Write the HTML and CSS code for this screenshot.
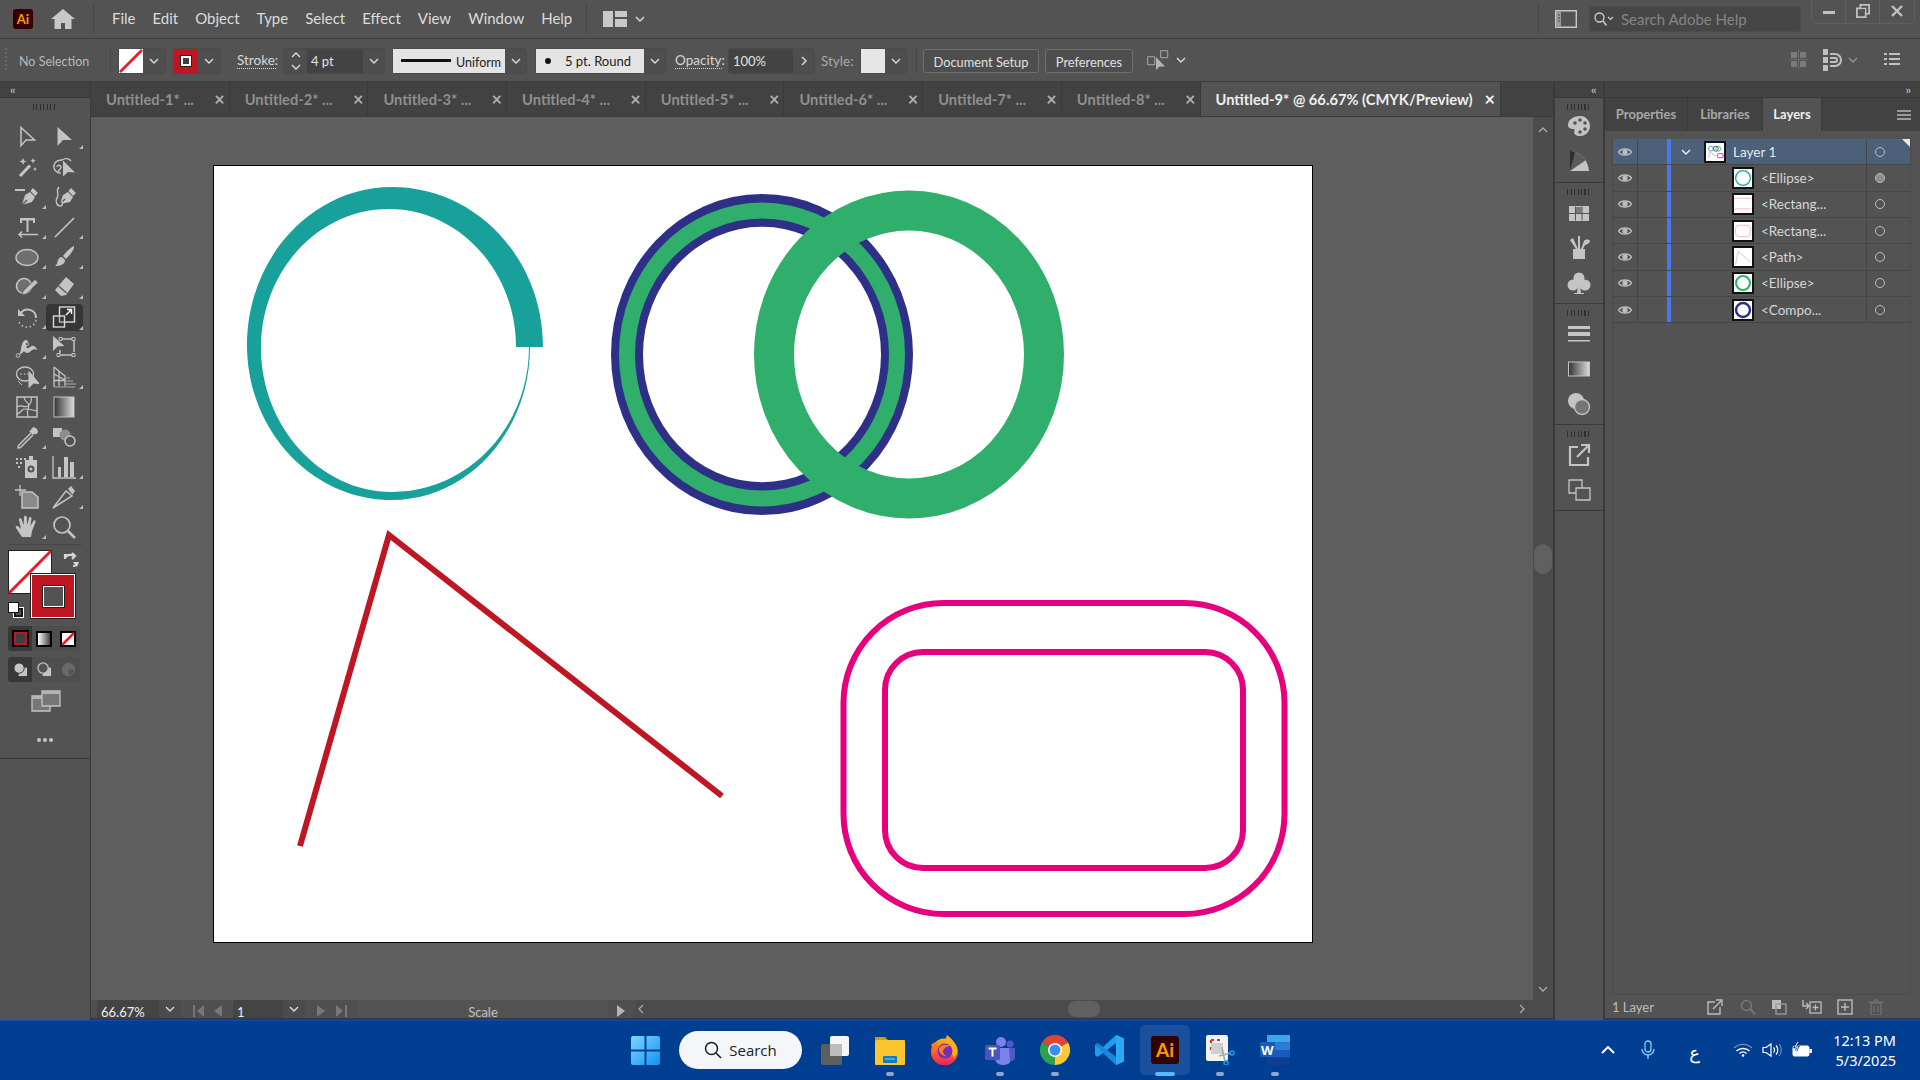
FILE: index.html
```html
<!DOCTYPE html>
<html lang="en">
<head>
<meta charset="utf-8">
<title>Adobe Illustrator</title>
<link rel="stylesheet" href="styles.css">
</head>
<body>
<svg class="defs" width="0" height="0" aria-hidden="true">
  <defs>
    <linearGradient id="gbar" x1="0" x2="1" y1="0" y2="0"><stop offset="0" stop-color="#333"/><stop offset="1" stop-color="#ddd"/></linearGradient>
    <linearGradient id="gwin" x1="0" x2="1" y1="0" y2="1"><stop offset="0" stop-color="#7cd8fb"/><stop offset="1" stop-color="#0f93f5"/></linearGradient>
    <linearGradient id="gfox" x1="0" x2="0" y1="0" y2="1"><stop offset="0" stop-color="#ffb31a"/><stop offset=".55" stop-color="#ff5a2b"/><stop offset="1" stop-color="#e3215f"/></linearGradient>
    <symbol id="chev" viewBox="0 0 10 6"><path d="M1 1l4 4 4-4" fill="none" stroke="#dcdcdc" stroke-width="1.4"/></symbol>
    <symbol id="t-sel" viewBox="0 0 24 24"><path d="M6 2.5v18l5-5.5h8.5z" fill="none" stroke="#c4c4c4" stroke-width="1.5"/></symbol>
    <symbol id="t-dir" viewBox="0 0 24 24"><path d="M5.5 2v19l5.5-6h9z" fill="#c4c4c4"/></symbol>
    <symbol id="t-wand" viewBox="0 0 24 24"><path d="M5 21L15 10.5" stroke="#c4c4c4" stroke-width="3" fill="none"/><path d="M8 3l1 2.5 2.5 1L9 7.5 8 10 7 7.5 4.500 6.500 7 5.500zM18 3l.8 2 2 .8-2 .8-.8 2-.8-2-2-.8 2-.8zM20 12l.6 1.500 1.500.6-1.500.6-.6 1.500-.6-1.500-1.500-.6 1.500-.6z" fill="#c4c4c4"/></symbol>
    <symbol id="t-lasso" viewBox="0 0 24 24"><path d="M10 5c-6 0-9 4-8 8 1 3 4 5 7 5M5 12a2 2 0 1 1 3 2c-1 1-2 2-2 4M10 5c3-2 7-2 9 1" fill="none" stroke="#c4c4c4" stroke-width="1.400"/><path d="M11 5.500v16l5-4.500 7 .5z" fill="#c4c4c4"/></symbol>
    <symbol id="t-pen" viewBox="0 0 24 24"><path d="M0 5h10" stroke="#c4c4c4" stroke-width="2"/><path d="M7 20l3-10 5-3 5 5-3 5zM15.500 6l2.500-3 5 5-3 3z" fill="#c4c4c4"/><path d="M7 20l5-5" stroke="#535353" stroke-width="1.200"/></symbol>
    <symbol id="t-curve" viewBox="0 0 24 24"><path d="M8 19l3-9 5-3 5 5-3 5zM16.500 6l2.500-3 5 5-3 3z" fill="#c4c4c4"/><path d="M8 19l5-5" stroke="#535353" stroke-width="1.200"/><path d="M7 2C3 6 8 9 5 13c-2 3 0 8 3 8s3-3 2-5" fill="none" stroke="#c4c4c4" stroke-width="1.400"/></symbol>
    <symbol id="t-type" viewBox="0 0 24 24"><path d="M5 3h15v5h-2V5.500h-4.500V17h-2V5.500H7V8H5z" fill="#c4c4c4"/><path d="M23 19.500H4M7 16.500l-3 3 3 3" fill="none" stroke="#c4c4c4" stroke-width="1.500"/></symbol>
    <symbol id="t-line" viewBox="0 0 24 24"><path d="M3 22L22 3" stroke="#c4c4c4" stroke-width="1.700"/></symbol>
    <symbol id="t-ell" viewBox="0 0 24 24"><ellipse cx="12" cy="12.500" rx="11" ry="8" fill="#6f6f6f" stroke="#c4c4c4" stroke-width="1.400"/></symbol>
    <symbol id="t-brush" viewBox="0 0 24 24"><path d="M22 1c1 3-4 9-8 13l-3-3c3-4 8-9 11-10z" fill="#c4c4c4"/><path d="M10 12l3 3c0 4-4 6-10 6 3-2 2-4 3-6s2-3 4-3z" fill="#c4c4c4"/></symbol>
    <symbol id="t-shaper" viewBox="0 0 24 24"><circle cx="9" cy="11" r="7.500" fill="#6f6f6f" stroke="#c4c4c4" stroke-width="1.600"/><path d="M7 20l1-4L20 4.500l3 3L11.500 19z" fill="#c4c4c4" stroke="#535353" stroke-width=".8"/></symbol>
    <symbol id="t-eraser" viewBox="0 0 24 24"><path d="M14 2l8 7-8 11-5 1-6-6z" fill="#c4c4c4"/><path d="M6.500 11l8 7" stroke="#535353" stroke-width="1.300"/></symbol>
    <symbol id="t-rot" viewBox="0 0 24 24"><path d="M6 8c4-6 15-4 15 5" fill="none" stroke="#c4c4c4" stroke-width="1.800"/><path d="M3 4v7h7z" fill="#c4c4c4"/><path d="M21 15a9 9 0 0 1-17 2" fill="none" stroke="#c4c4c4" stroke-width="1.500" stroke-dasharray="1.500 2.600"/></symbol>
    <symbol id="t-scale" viewBox="0 0 24 24"><rect x="7.500" y="2" width="15" height="15" fill="none" stroke="#d8d8d8" stroke-width="1.400"/><rect x="1.500" y="11" width="11" height="11" fill="#333" fill-opacity=".2" stroke="#d8d8d8" stroke-width="1.400"/><path d="M14 10l5-5M15 4.500h4.500V9" fill="none" stroke="#fff" stroke-width="1.400"/></symbol>
    <symbol id="t-width" viewBox="0 0 24 24"><path d="M2 20c5 0 3-8 6-13 1.500-2 4-3 5 0 1 2-3 4-1 6 2 1 4-3 7-2 2 1 3 3 3 4-2-1-4-1-6 1-3 3-6 2-7 0-1 1-3 4-7 4z" fill="#c4c4c4"/><circle cx="3" cy="20.500" r="1.800" fill="#535353" stroke="#c4c4c4"/><circle cx="12" cy="9" r="1.600" fill="#535353" stroke="#c4c4c4"/></symbol>
    <symbol id="t-free" viewBox="0 0 24 24"><path d="M1 1v15l4.500-4.500 7-.5z" fill="#c4c4c4"/><path d="M9 4h11M22 6v11M7 20h13M8 15v3" fill="none" stroke="#c4c4c4" stroke-width="1.500"/><path d="M7 2.500h3v3H7zM20 2.500h3v3h-3zM20 18.500h3v3h-3zM5 18.500h3v3H5z" fill="#535353" stroke="#c4c4c4"/></symbol>
    <symbol id="t-build" viewBox="0 0 24 24"><ellipse cx="10" cy="9" rx="8.500" ry="7" fill="none" stroke="#c4c4c4" stroke-width="1.400"/><path d="M6 9h.1M9.500 9h.1M13 9h.1" stroke="#c4c4c4" stroke-width="1.600" stroke-linecap="round"/><path d="M3 16l4 4M14 6.500v16l4.500-4.500 5.500.5z" fill="#c4c4c4" stroke="#c4c4c4"/></symbol>
    <symbol id="t-persp" viewBox="0 0 24 24"><path d="M2 2v20M2 2l11 9v10M2 9l11 6M2 15.500h11M7 6v16" fill="none" stroke="#c4c4c4" stroke-width="1.300"/><path d="M14 13h4M14 16h7M14 19h10M2 22h21" stroke="#8f8f8f" stroke-width="1.400"/></symbol>
    <symbol id="t-mesh" viewBox="0 0 24 24"><rect x="2" y="2" width="20" height="20" fill="none" stroke="#c4c4c4" stroke-width="1.500"/><path d="M2 12c6-4 8 3 12-2s2-5 2-8M9 2c0 5 5 6 5 8s-3 5-1 12M2 19c4-1 5-5 7-5s6 0 13 2" fill="none" stroke="#c4c4c4" stroke-width="1.200"/></symbol>
    <symbol id="t-grad" viewBox="0 0 24 24"><rect x="2" y="2" width="20" height="20" fill="url(#gbar)" stroke="#c4c4c4" stroke-width="1"/></symbol>
    <symbol id="t-drop" viewBox="0 0 24 24"><path d="M16 8l-12 12c-1 1-1 2-1 3 1 0 2 0 3-1L18 10" fill="none" stroke="#c4c4c4" stroke-width="1.500"/><path d="M14 6l4 4 1-1c1 0 3 1 4-2 0-3-4-6-6-4-1 1-1 2-1 2z" fill="#c4c4c4"/></symbol>
    <symbol id="t-blend" viewBox="0 0 24 24"><path d="M1 3h9v9H1z" fill="#c4c4c4"/><circle cx="13" cy="10" r="5.500" fill="#8e8e8e"/><circle cx="18" cy="16" r="5" fill="#535353" stroke="#c4c4c4" stroke-width="1.500"/></symbol>
    <symbol id="t-spray" viewBox="0 0 24 24"><path d="M1 4h2M5 4h2M9 4h2M1 8h2M5 8h2M3 12h2" stroke="#c4c4c4" stroke-width="2"/><path d="M14 1h4v4h-4zM10 5h12v18H10z" fill="#c4c4c4"/><circle cx="16" cy="14" r="3.500" fill="#535353"/><circle cx="16" cy="14" r="1.500" fill="#c4c4c4"/></symbol>
    <symbol id="t-chart" viewBox="0 0 24 24"><path d="M1 1v22h23" fill="none" stroke="#c4c4c4" stroke-width="1.300"/><path d="M6 12h3v10H6zM12 2h4v20h-4zM18 7h4v15h-4z" fill="#c4c4c4"/></symbol>
    <symbol id="t-board" viewBox="0 0 24 24"><path d="M7 7h10l6 5v11H7z" fill="#8a8a8a" stroke="#c4c4c4" stroke-width="1.500"/><path d="M5 0v11M0 5h11" stroke="#c4c4c4" stroke-width="1.300"/></symbol>
    <symbol id="t-knife" viewBox="0 0 24 24"><path d="M1 23L14 6l6 5z" fill="none" stroke="#c4c4c4" stroke-width="1.500"/><path d="M16 4l3-3 4 5-2.500 3.500z" fill="#c4c4c4"/></symbol>
    <symbol id="t-hand" viewBox="0 0 24 24"><path d="M7 22l-6-9c-1-2 1-3 2.500-1.500L6 14 4 5c-.4-2 2-2.500 2.600-.7L8.500 10l.5-8c.2-1.800 2.600-1.800 2.800 0l.4 8 1.800-7c.5-1.800 2.800-1.200 2.500.6L15.500 11l2.800-5c1-1.500 3-.6 2.200 1.200L17 16l-1 6z" fill="#c4c4c4"/></symbol>
    <symbol id="t-zoom" viewBox="0 0 24 24"><circle cx="10" cy="10" r="8" fill="none" stroke="#c4c4c4" stroke-width="1.700"/><path d="M16 16l7 7" stroke="#c4c4c4" stroke-width="2.500"/></symbol>
    <symbol id="eye" viewBox="0 0 14 10"><path d="M.5 5C3 1 11 1 13.500 5 11 9 3 9 .5 5z" fill="none" stroke="#bdbdbd" stroke-width="1.400"/><circle cx="7" cy="5" r="2.600" fill="#bdbdbd"/></symbol>
    <symbol id="d-palette" viewBox="0 0 24 24"><path d="M13 2C6 2 1 6 1 11c0 3 3 4 5 4s2 1 1 3c0 2 2 4 6 4 6 0 10-5 10-10S19 2 13 2z" fill="#c4c4c4"/><circle cx="8" cy="9" r="1.800" fill="#535353"/><circle cx="13" cy="6" r="1.800" fill="#535353"/><circle cx="18" cy="9" r="1.800" fill="#535353"/><circle cx="18" cy="15" r="1.800" fill="#535353"/><circle cx="13" cy="18" r="1.800" fill="#535353"/></symbol>
    <symbol id="d-guide" viewBox="0 0 24 24"><path d="M3 2c11 1 18 9 19 20H3z" fill="#c4c4c4"/><path d="M3 22L8 3 3 2zM3 22L14 6 8 3zM3 22l16-11-5-5z" fill="#5a5a5a"/><path d="M3 22L8 3 3 2z" fill="#2e2e2e"/></symbol>
    <symbol id="d-swatch" viewBox="0 0 24 24"><path d="M2 5h20v15H2z" fill="#c4c4c4"/><path d="M8.500 5.500v14M15 5.500v14M2 12.500h20" stroke="#535353"/><path d="M9 6h6v6H9z" fill="#7a7a7a"/></symbol>
    <symbol id="d-brushes" viewBox="0 0 24 24"><path d="M6 13h12v10H6z" fill="#c4c4c4"/><path d="M9 13L3 4l3-2 5 11zM11 13V0h2v13zM14 13l3-8c1-2 6-2 6 0s-4 4-5 4l-2 4z" fill="#c4c4c4"/></symbol>
    <symbol id="d-club" viewBox="0 0 24 24"><circle cx="12" cy="7" r="5.500" fill="#c4c4c4"/><circle cx="6" cy="14" r="5.500" fill="#c4c4c4"/><circle cx="18" cy="14" r="5.500" fill="#c4c4c4"/><path d="M11 12h2l1 10h3v1H7v-1h3z" fill="#c4c4c4"/></symbol>
    <symbol id="d-stroke" viewBox="0 0 24 24"><path d="M1 4h22v3H1zM1 10h22v4H1z" fill="#c4c4c4"/><path d="M1 18h22v1.500H1z" fill="#c4c4c4"/></symbol>
    <symbol id="d-grad" viewBox="0 0 24 24"><rect x="1.500" y="5" width="21" height="14" fill="url(#gbar)" stroke="#c4c4c4"/></symbol>
    <symbol id="d-trans" viewBox="0 0 24 24"><circle cx="9" cy="9" r="8" fill="#c4c4c4"/><circle cx="15" cy="15" r="7.500" fill="#757575" stroke="#c4c4c4" stroke-width="1.300"/></symbol>
    <symbol id="d-export" viewBox="0 0 24 24"><path d="M11 4H3v18h18v-8" fill="none" stroke="#c4c4c4" stroke-width="2.200"/><path d="M10 14L21 3M14 2h8v8" fill="none" stroke="#c4c4c4" stroke-width="2.200"/></symbol>
    <symbol id="d-boards" viewBox="0 0 24 24"><path d="M2 2h13v13H2z" fill="none" stroke="#c4c4c4" stroke-width="1.300"/><path d="M9 10h14v12H9z" fill="#535353" stroke="#c4c4c4" stroke-width="1.300"/></symbol>
  </defs>
</svg>

<div class="app">
  <header class="titlebar">
    <div class="ai-logo">Ai</div>
    <svg class="home" viewBox="0 0 24 20"><path d="M12 0L0 10h3.500v10h6.500v-6h4v6h6.500V10H24z" fill="#c8c8c8"/></svg>
    <i class="vsep first"></i>
    <nav class="menu"><span>File</span><span>Edit</span><span>Object</span><span>Type</span><span>Select</span><span>Effect</span><span>View</span><span>Window</span><span>Help</span></nav>
    <i class="vsep"></i>
    <svg class="workspace" viewBox="0 0 24 16"><path d="M0 0h10v16H0zM12 0h12v6H12zM12 8h12v8H12z" fill="#c8c8c8"/></svg>
    <svg class="chev wsc"><use href="#chev"/></svg>
    <div class="grow"></div>
    <i class="vsep tall"></i>
    <svg class="panelicon" viewBox="0 0 22 18"><path d="M.7.700h20.600v16.600H.7z" fill="none" stroke="#c8c8c8" stroke-width="1.400"/><path d="M1 1h5v16H1z" fill="#9a9a9a"/><path d="M3 5h2M3 8h2M3 11h2" stroke="#444"/></svg>
    <div class="search">
      <svg class="sglass" viewBox="0 0 20 14"><circle cx="5.500" cy="5.500" r="4.500" fill="none" stroke="#d0d0d0" stroke-width="1.300"/><path d="M9 9l3.500 4.500" stroke="#d0d0d0" stroke-width="1.400"/><path d="M14 5l2.500 2.500L19 5" fill="none" stroke="#d0d0d0" stroke-width="1.100"/></svg>
      <span>Search Adobe Help</span>
    </div>
    <div class="winbtns">
      <div class="wb"><svg viewBox="0 0 14 14"><path d="M1 7h12v3H1z" fill="#c0c0c0"/></svg></div>
      <div class="wb"><svg viewBox="0 0 16 16"><path d="M5 1h10v10h-4v4H1V5h4z" fill="none" stroke="#c0c0c0" stroke-width="2"/><path d="M5 5h6v6" fill="none" stroke="#c0c0c0" stroke-width="1.500"/></svg></div>
      <div class="wb nb"><svg viewBox="0 0 14 14"><path d="M2 2l10 10M12 2L2 12" stroke="#c0c0c0" stroke-width="2.400"/></svg></div>
    </div>
  </header>

  <section class="controlbar">
    <i class="cgrip"></i>
    <span class="lbl nosel">No Selection</span>
    <i class="csep"></i>
    <div class="grp g-fill"><div class="swatch white"><svg viewBox="0 0 24 24"><path d="M1 23L23 1" stroke="#e8202a" stroke-width="2.800"/></svg></div><div class="dd"><svg class="chev"><use href="#chev"/></svg></div></div>
    <div class="grp g-stroke"><div class="swatch red"><i class="hole"></i></div><div class="dd"><svg class="chev"><use href="#chev"/></svg></div></div>
    <span class="lbl dotted l-stroke">Stroke:</span>
    <div class="grp g-spin">
      <div class="spin"><svg class="chev up"><use href="#chev"/></svg><svg class="chev"><use href="#chev"/></svg></div>
      <div class="field f-pt">4 pt</div>
      <div class="dd"><svg class="chev"><use href="#chev"/></svg></div>
    </div>
    <div class="grp g-line">
      <div class="light lineprev"><i class="bar"></i><span>Uniform</span></div>
      <div class="dd"><svg class="chev"><use href="#chev"/></svg></div>
    </div>
    <div class="grp g-round">
      <div class="light roundprev"><i class="dot"></i><span>5 pt. Round</span></div>
      <div class="dd"><svg class="chev"><use href="#chev"/></svg></div>
    </div>
    <span class="lbl dotted l-op">Opacity:</span>
    <div class="grp g-op">
      <div class="field f-op">100%</div>
      <div class="dd"><svg class="chev right" viewBox="0 0 6 10"><path d="M1 1l4 4-4 4" fill="none" stroke="#dcdcdc" stroke-width="1.400"/></svg></div>
    </div>
    <span class="lbl dim l-style">Style:</span>
    <div class="grp g-style"><div class="swatch pale"></div><div class="dd"><svg class="chev"><use href="#chev"/></svg></div></div>
    <i class="csep s2"></i>
    <button class="cbtn b-doc">Document Setup</button>
    <button class="cbtn b-pref">Preferences</button>
    <svg class="isol" viewBox="0 0 22 20"><path d="M.700 6.700h7v8h-7zM13.700.700h7v7h-7z" fill="none" stroke="#a8a8a8"/><path d="M9 7v13l3.500-3.500H18z" fill="#b4b4b4"/></svg>
    <svg class="chev isc"><use href="#chev"/></svg>
    <div class="grow"></div>
    <svg class="cr cr-grid" viewBox="0 0 20 20"><path d="M2 2h6v6H2zM11 2h6v6h-6zM2 11h6v6H2zM11 11h6v6h-6z" fill="#7a7a7a"/><path d="M0 9.500h19M9.500 0v19" stroke="#6a6a6a"/></svg>
    <svg class="cr cr-mag" viewBox="0 0 20 24"><path d="M1 1h5v6H1zM1 9h5v6H1zM1 17h5v6H1z" fill="#c0c0c0"/><path d="M8 6h5a6 6 0 0 1 0 12H8M8 10h5a2 2 0 0 1 0 4H8" fill="none" stroke="#c0c0c0" stroke-width="2"/></svg>
    <svg class="chev cr-c"><use href="#chev"/></svg>
    <svg class="cr cr-list" viewBox="0 0 16 14"><path d="M0 1h3M5 1h11M0 6h3M5 6h11M0 11h3M5 11h11" stroke="#c0c0c0" stroke-width="1.800"/></svg>
  </section>

  <main class="workspace-area">
    <aside class="toolpanel">
      <div class="phead"><span class="dbl">‹‹</span></div>
      <i class="grip"></i>
      <div class="tools">
        <div class="tool"><svg><use href="#t-sel"/></svg></div>
        <div class="tool m"><svg><use href="#t-dir"/></svg></div>
        <div class="tool"><svg><use href="#t-wand"/></svg></div>
        <div class="tool"><svg><use href="#t-lasso"/></svg></div>
        <div class="tool m"><svg><use href="#t-pen"/></svg></div>
        <div class="tool"><svg><use href="#t-curve"/></svg></div>
        <div class="tool m"><svg><use href="#t-type"/></svg></div>
        <div class="tool m"><svg><use href="#t-line"/></svg></div>
        <div class="tool m"><svg><use href="#t-ell"/></svg></div>
        <div class="tool m"><svg><use href="#t-brush"/></svg></div>
        <div class="tool m"><svg><use href="#t-shaper"/></svg></div>
        <div class="tool m"><svg><use href="#t-eraser"/></svg></div>
        <div class="tool m"><svg><use href="#t-rot"/></svg></div>
        <div class="tool m on"><svg><use href="#t-scale"/></svg></div>
        <div class="tool m"><svg><use href="#t-width"/></svg></div>
        <div class="tool"><svg><use href="#t-free"/></svg></div>
        <div class="tool m"><svg><use href="#t-build"/></svg></div>
        <div class="tool m"><svg><use href="#t-persp"/></svg></div>
        <div class="tool"><svg><use href="#t-mesh"/></svg></div>
        <div class="tool"><svg><use href="#t-grad"/></svg></div>
        <div class="tool m"><svg><use href="#t-drop"/></svg></div>
        <div class="tool"><svg><use href="#t-blend"/></svg></div>
        <div class="tool m"><svg><use href="#t-spray"/></svg></div>
        <div class="tool m"><svg><use href="#t-chart"/></svg></div>
        <div class="tool"><svg><use href="#t-board"/></svg></div>
        <div class="tool m"><svg><use href="#t-knife"/></svg></div>
        <div class="tool m"><svg><use href="#t-hand"/></svg></div>
        <div class="tool"><svg><use href="#t-zoom"/></svg></div>
      </div>
      <i class="toolsep"></i>
      <div class="fillstroke">
        <svg class="fs-fill" viewBox="0 0 44 44"><rect x=".5" y=".5" width="43" height="43" fill="#fff" stroke="#222"/><path d="M1 43L43 1" stroke="#f01c24" stroke-width="3"/></svg>
        <div class="fs-stroke"><i></i></div>
        <svg class="fs-swap" viewBox="0 0 16 16"><path d="M2 6c1-3 5-4 9-2M9 1l3 3-3 3M5 3H2v4M14 10c0 2-1 4-4 4" fill="none" stroke="#d6d6d6" stroke-width="2.200"/><path d="M10 10l4 5 2-5z" fill="#d6d6d6"/></svg>
        <svg class="fs-def" viewBox="0 0 16 16"><rect x="5.500" y="5.500" width="10" height="10" fill="#111" stroke="#fff"/><rect x="7.800" y="7.800" width="5.400" height="5.400" fill="#535353"/><rect x=".5" y=".5" width="10" height="10" fill="#fff" stroke="#111"/></svg>
      </div>
      <div class="trio modes">
        <div class="cell on"><i class="cm c-color"></i></div>
        <div class="cell"><i class="cm c-grad"></i></div>
        <div class="cell"><svg class="cm" viewBox="0 0 16 16"><rect x="1" y="1" width="14" height="14" fill="#fff" stroke="#000" stroke-width="2"/><path d="M2 14L14 2" stroke="#f01c24" stroke-width="2.500"/></svg></div>
      </div>
      <div class="trio draws">
        <div class="cell on"><svg class="dm" viewBox="0 0 16 16"><path d="M6 6h9v9H6z" fill="#c4c4c4"/><circle cx="6.500" cy="6.500" r="5.500" fill="#c4c4c4" stroke="#333"/></svg></div>
        <div class="cell"><svg class="dm" viewBox="0 0 16 16"><path d="M6 6h9v9H6z" fill="#c4c4c4"/><circle cx="6.500" cy="6.500" r="5.500" fill="#535353" stroke="#c4c4c4" stroke-width="1.300"/></svg></div>
        <div class="cell"><svg class="dm" viewBox="0 0 16 16"><circle cx="8" cy="8" r="6.500" fill="#6a6a6a" stroke="#707070"/><path d="M8 8h6a6 6 0 0 1-6 6z" fill="#535353"/></svg></div>
      </div>
      <svg class="screenmode" viewBox="0 0 30 22"><path d="M1 6h18v15H1z" fill="#777" stroke="#c4c4c4" stroke-width="1.300"/><path d="M11 1h18v15H11z" fill="#777" stroke="#c4c4c4" stroke-width="1.300"/><path d="M11 1h18v3H11zM1 6h10v3H1z" fill="#b4b4b4"/></svg>
      <div class="more3"><i></i><i></i><i></i></div>
      <i class="toolend"></i>
    </aside>

    <section class="docarea">
      <div class="tabs">
        <div class="tab"><span>Untitled-1* ...</span><b>×</b></div>
        <div class="tab"><span>Untitled-2* ...</span><b>×</b></div>
        <div class="tab"><span>Untitled-3* ...</span><b>×</b></div>
        <div class="tab"><span>Untitled-4* ...</span><b>×</b></div>
        <div class="tab"><span>Untitled-5* ...</span><b>×</b></div>
        <div class="tab"><span>Untitled-6* ...</span><b>×</b></div>
        <div class="tab"><span>Untitled-7* ...</span><b>×</b></div>
        <div class="tab"><span>Untitled-8* ...</span><b>×</b></div>
        <div class="tab active"><span>Untitled-9* @ 66.67% (CMYK/Preview)</span><b>×</b></div>
      </div>
      <div class="canvasrow">
        <div class="canvas">
          <svg class="artboard" viewBox="213 165 1100 778">
            <rect x="213" y="165" width="1100" height="778" fill="#fff"/>
            <path d="M543 347C543 258.600 476 187 392 187C312 187 247 258 247 345C247 430.600 312 500 392 500C468 500 530 431.500 530 347L529 347C529 427 468 492 392 492C320 492 261 426 261 348C261 271 318 209 389 209C459 209 516 271 516 347Z" fill="#18a19b"/>
            <ellipse cx="762" cy="354.500" rx="151" ry="160.500" fill="#2e3087"/>
            <ellipse cx="762" cy="354.500" rx="143" ry="152" fill="#30ae6b"/>
            <ellipse cx="762" cy="354.500" rx="127" ry="136" fill="#2e3087"/>
            <ellipse cx="762" cy="354.500" rx="119" ry="127.700" fill="#fff"/>
            <ellipse cx="909" cy="354.500" rx="135" ry="144" fill="none" stroke="#30ae6b" stroke-width="40"/>
            <path d="M300 846L389 535L722 796" fill="none" stroke="#be1622" stroke-width="6"/>
            <rect x="843.500" y="603" width="441" height="311" rx="100" fill="none" stroke="#e6007e" stroke-width="6"/>
            <rect x="885" y="652" width="358" height="216" rx="38" fill="none" stroke="#e6007e" stroke-width="6"/>
          </svg>
        </div>
        <div class="vscroll">
          <svg class="chev sc-up" viewBox="0 0 10 6"><path d="M1 5l4-4 4 4" fill="none" stroke="#a8a8a8" stroke-width="1.400"/></svg>
          <i class="vthumb"></i>
          <svg class="chev sc-dn"><use href="#chev"/></svg>
        </div>
      </div>
      <div class="status">
        <div class="sfield z">66.67%</div>
        <div class="sdd"><svg class="chev"><use href="#chev"/></svg></div>
        <svg class="nav n1" viewBox="0 0 12 12"><path d="M0 0h2v12H0zM11 0v12L4 6z" fill="#777"/></svg>
        <svg class="nav n2" viewBox="0 0 8 12"><path d="M8 0v12L0 6z" fill="#777"/></svg>
        <div class="sfield p">1</div>
        <div class="sdd"><svg class="chev"><use href="#chev"/></svg></div>
        <svg class="nav n3" viewBox="0 0 8 12"><path d="M0 0v12l8-6z" fill="#777"/></svg>
        <svg class="nav n4" viewBox="0 0 12 12"><path d="M1 0v12l7-6zM10 0h2v12h-2z" fill="#777"/></svg>
        <div class="stool">Scale</div>
        <svg class="nav n5" viewBox="0 0 8 12"><path d="M0 0v12l8-6z" fill="#b4b4b4"/></svg>
        <div class="hscroll">
          <svg class="hs-l" viewBox="0 0 6 10"><path d="M5 1L1 5l4 4" fill="none" stroke="#a8a8a8" stroke-width="1.300"/></svg>
          <i class="hthumb"></i>
          <svg class="hs-r" viewBox="0 0 6 10"><path d="M1 1l4 4-4 4" fill="none" stroke="#a8a8a8" stroke-width="1.300"/></svg>
        </div>
      </div>
    </section>

    <aside class="dock">
      <div class="phead right"><span class="dbl">‹‹</span></div>
      <div class="dgroup h85"><i class="grip"></i><svg><use href="#d-palette"/></svg><svg><use href="#d-guide"/></svg></div>
      <div class="dgroup h120"><i class="grip"></i><svg><use href="#d-swatch"/></svg><svg><use href="#d-brushes"/></svg><svg><use href="#d-club"/></svg></div>
      <div class="dgroup h121"><i class="grip"></i><svg><use href="#d-stroke"/></svg><svg><use href="#d-grad"/></svg><svg><use href="#d-trans"/></svg></div>
      <div class="dgroup h86"><i class="grip"></i><svg><use href="#d-export"/></svg><svg><use href="#d-boards"/></svg></div>
    </aside>

    <aside class="panel">
      <div class="phead far"><span class="dbl">››</span></div>
      <div class="ptabs">
        <div class="ptab w83">Properties</div>
        <div class="ptab w75">Libraries</div>
        <div class="ptab active w59">Layers</div>
        <svg class="pmenu" viewBox="0 0 14 10"><path d="M0 1h14M0 5h14M0 9h14" stroke="#b8b8b8" stroke-width="1.300"/></svg>
      </div>
      <div class="layers">
        <div class="row sel">
          <div class="c-eye"><svg><use href="#eye"/></svg></div><div class="c-lock"></div><i class="cbar"></i>
          <svg class="tw" viewBox="0 0 10 6"><path d="M1 1l4 4 4-4" fill="none" stroke="#f0f0f0" stroke-width="1.400"/></svg>
          <svg class="thumb" viewBox="0 0 22 22"><circle cx="6" cy="7" r="3" fill="none" stroke="#18a19b"/><circle cx="12" cy="7" r="3" fill="none" stroke="#2e3087"/><circle cx="15" cy="7" r="3" fill="none" stroke="#30ae6b"/><path d="M3 18l2-7 7 5" fill="none" stroke="#e8a0b0"/><rect x="14" y="13" width="7" height="5" rx="1.500" fill="none" stroke="#ec008c"/></svg>
          <span class="lname">Layer 1</span>
          <div class="c-t"><i class="tgt"></i></div><i class="corner"></i>
        </div>
        <div class="row">
          <div class="c-eye"><svg><use href="#eye"/></svg></div><div class="c-lock"></div><i class="cbar"></i>
          <svg class="thumb sub" viewBox="0 0 22 22"><circle cx="11" cy="11" r="9" fill="none" stroke="#18a19b" stroke-width="1.500"/></svg>
          <span class="lname">&lt;Ellipse&gt;</span>
          <div class="c-t"><i class="tgt full"></i></div>
        </div>
        <div class="row">
          <div class="c-eye"><svg><use href="#eye"/></svg></div><div class="c-lock"></div><i class="cbar"></i>
          <svg class="thumb sub" viewBox="0 0 22 22"><path d="M1 4h20M1 17h20" fill="none" stroke="#f4b8d0" stroke-width="1.200"/></svg>
          <span class="lname">&lt;Rectang...</span>
          <div class="c-t"><i class="tgt"></i></div>
        </div>
        <div class="row">
          <div class="c-eye"><svg><use href="#eye"/></svg></div><div class="c-lock"></div><i class="cbar"></i>
          <svg class="thumb sub" viewBox="0 0 22 22"><rect x="2" y="4" width="18" height="14" rx="4" fill="none" stroke="#f4b8d0" stroke-width="1.200"/></svg>
          <span class="lname">&lt;Rectang...</span>
          <div class="c-t"><i class="tgt"></i></div>
        </div>
        <div class="row">
          <div class="c-eye"><svg><use href="#eye"/></svg></div><div class="c-lock"></div><i class="cbar"></i>
          <svg class="thumb sub" viewBox="0 0 22 22"><path d="M2 20L5 4l15 13" fill="none" stroke="#f0b0bc"/></svg>
          <span class="lname">&lt;Path&gt;</span>
          <div class="c-t"><i class="tgt"></i></div>
        </div>
        <div class="row">
          <div class="c-eye"><svg><use href="#eye"/></svg></div><div class="c-lock"></div><i class="cbar"></i>
          <svg class="thumb sub" viewBox="0 0 22 22"><circle cx="11" cy="11" r="8.500" fill="none" stroke="#30ae6b" stroke-width="2.500"/></svg>
          <span class="lname">&lt;Ellipse&gt;</span>
          <div class="c-t"><i class="tgt"></i></div>
        </div>
        <div class="row">
          <div class="c-eye"><svg><use href="#eye"/></svg></div><div class="c-lock"></div><i class="cbar"></i>
          <svg class="thumb sub" viewBox="0 0 22 22"><circle cx="11" cy="11" r="8.500" fill="none" stroke="#2e3087" stroke-width="3"/></svg>
          <span class="lname">&lt;Compo...</span>
          <div class="c-t"><i class="tgt"></i></div>
        </div>
      </div>
      <div class="pfoot">
        <span class="count">1 Layer</span>
        <svg class="fi f1" viewBox="0 0 16 16"><path d="M8 3H1v12h12V8" fill="none" stroke="#bdbdbd" stroke-width="1.400"/><path d="M6 10l8-8M9 1h6v6" fill="none" stroke="#bdbdbd" stroke-width="1.400"/></svg>
        <svg class="fi f2" viewBox="0 0 16 16"><circle cx="6.500" cy="6.500" r="5" fill="none" stroke="#777" stroke-width="1.400"/><path d="M10 10l5 5" stroke="#777" stroke-width="1.800"/></svg>
        <svg class="fi f3" viewBox="0 0 16 16"><rect x="1" y="1" width="9" height="9" fill="#bdbdbd"/><rect x="5" y="5" width="10" height="10" fill="none" stroke="#999" stroke-width="1.400"/></svg>
        <svg class="fi f4" viewBox="0 0 20 16"><path d="M1 1v6h5M4 4l3 3-3 3" fill="none" stroke="#bdbdbd" stroke-width="1.400"/><rect x="8" y="3" width="11" height="11" fill="none" stroke="#bdbdbd" stroke-width="1.300"/><path d="M13.500 5.500v6M10.500 8.500h6" stroke="#bdbdbd" stroke-width="1.300"/></svg>
        <svg class="fi f5" viewBox="0 0 16 16"><rect x="1" y="1" width="14" height="14" fill="none" stroke="#bdbdbd" stroke-width="1.400"/><path d="M8 4v8M4 8h8" stroke="#bdbdbd" stroke-width="1.400"/></svg>
        <svg class="fi f6" viewBox="0 0 16 16"><path d="M3 4h10v12H3zM1 3h14M6 1h4M6 7v6M10 7v6" fill="none" stroke="#6f6f6f" stroke-width="1.400"/></svg>
      </div>
    </aside>
  </main>

  <footer class="taskbar">
    <div class="tb-center">
      <svg class="win" viewBox="0 0 29 29"><path d="M0 2a2 2 0 0 1 2-2h11.500v13.500H0zM15.500 0H27a2 2 0 0 1 2 2v11.500H15.500zM0 15.500h13.500V29H2a2 2 0 0 1-2-2zM15.500 15.500H29V27a2 2 0 0 1-2 2H15.500z" fill="url(#gwin)"/></svg>
      <div class="tsearch"><svg viewBox="0 0 18 18"><circle cx="7.500" cy="7.500" r="6" fill="none" stroke="#1b1b1b" stroke-width="1.500"/><path d="M12 12l5 5" stroke="#1b1b1b" stroke-width="1.600"/></svg><span>Search</span></div>
      <div class="app-i"><svg viewBox="0 0 30 30"><rect x="10" y="1" width="19" height="20" rx="2" fill="#f6f6f6"/><rect x="1" y="9" width="21" height="21" rx="2" fill="#5e5e5e"/><rect x="10" y="9" width="12" height="12" fill="#bdbdbd"/></svg></div>
      <div class="app-i dot"><svg viewBox="0 0 30 30"><path d="M0 2h10l3 3h-13z" fill="#d99a00"/><rect y="5" width="30" height="25" rx="1" fill="#fcc72e"/><rect x="8" y="21" width="14" height="7" rx="1" fill="#0d7cc4"/><path d="M10 24h10" stroke="#8cd0f5"/></svg></div>
      <div class="app-i"><svg viewBox="0 0 30 30"><circle cx="14.500" cy="17" r="13.500" fill="url(#gfox)"/><path d="M17 0c5 4 9 8 10 14 1 4-1 7-3 9-3-7-8-10-10-13 1-4 2-7 3-10z" fill="#ffab1c"/><path d="M1 10c3-3 4-3 6-3l-3 8z" fill="#ff7a1e"/><circle cx="15" cy="16" r="7.500" fill="#6f2fb8"/><path d="M9 13c3-4 8-4 12-2-5 0-8 3-8 6 0 2 2 4 5 4-5 1-10-3-9-8z" fill="#ff7a1e"/></svg></div>
      <div class="app-i dot"><svg viewBox="0 0 30 30"><circle cx="16" cy="7" r="5" fill="#7b83eb"/><circle cx="25" cy="9" r="3.500" fill="#5059c9"/><path d="M10 13h16v10c0 5-3 7-8 7s-8-3-8-7z" fill="#7b83eb"/><path d="M24 13h6v9c0 3-2 4-5 4z" fill="#5059c9"/><rect y="10" width="15" height="15" rx="1.500" fill="#4b53bc"/><path d="M3.500 13.500h8M7.500 13.500v8" stroke="#fff" stroke-width="2"/></svg></div>
      <div class="app-i dot"><svg viewBox="0 0 30 30"><path d="M2 7.500A15 15 0 0 1 28 7.500L15 15z" fill="#e04436"/><path d="M28 7.500A15 15 0 0 1 15 30L15 15z" fill="#fcc934"/><path d="M15 30A15 15 0 0 1 2 7.500L15 15z" fill="#2ca24f"/><circle cx="15" cy="15" r="7" fill="#fff"/><circle cx="15" cy="15" r="5.500" fill="#3c8df0"/></svg></div>
      <div class="app-i"><svg viewBox="0 0 30 30"><path d="M21 0l8 3.500v23L21 30 8 18l-5.500 4L0 20V10l2.500-2L8 12z" fill="#1f9cf0"/><path d="M21 8L12 15l9 7z" fill="#003e92"/><path d="M21 0l8 3.500v23L21 30z" fill="#2aaaf5"/><path d="M0 10l2.500-2L21 22v8z" fill="#1178c4" fill-opacity=".55"/></svg></div>
      <div class="app-i ai-active"><div class="ai-logo big">Ai</div></div>
      <div class="app-i dot"><svg viewBox="0 0 30 30"><rect x="1" y="0" width="22" height="26" rx="2" fill="#f2f2f2"/><path d="M6 5h3M12 5h3M6 5v3M6 12v3" stroke="#d33a1f" stroke-width="2.200"/><rect x="6" y="8" width="12" height="11" fill="#d0d0d0"/><path d="M17 12l3 15M26 18l-12 3" stroke="#9fa9b0" stroke-width="1.500"/><circle cx="21" cy="28" r="2" fill="none" stroke="#1f9cf0" stroke-width="1.500"/><circle cx="27" cy="18" r="2" fill="none" stroke="#1f9cf0" stroke-width="1.500"/></svg></div>
      <div class="app-i dot"><svg viewBox="0 0 30 30"><rect x="7" y="0" width="23" height="7.500" fill="#41a5ee"/><rect x="7" y="7.500" width="23" height="7.500" fill="#2b7cd3"/><rect x="7" y="15" width="23" height="7.500" fill="#185abd"/><rect x="7" y="22.500" width="23" height="7.500" fill="#103f91"/><rect y="7" width="15" height="15" rx="1.500" fill="#1c5bb8"/></svg><span class="w-letter">W</span></div>
    </div>
    <div class="tray">
      <svg class="tr t1" viewBox="0 0 14 8"><path d="M1 7l6-6 6 6" fill="none" stroke="#fff" stroke-width="2"/></svg>
      <svg class="tr t2" viewBox="0 0 14 20"><rect x="4" y="1" width="6" height="11" rx="3" fill="none" stroke="#7fd0f5" stroke-width="1.300"/><path d="M1 9a6 6 0 0 0 12 0M7 15v4" fill="none" stroke="#7fd0f5" stroke-width="1.300"/></svg>
      <span class="ime">ع</span>
      <svg class="tr t3" viewBox="0 0 20 14"><path d="M1 5a13 13 0 0 1 18 0" fill="none" stroke="#6d94c9" stroke-width="1.300"/><path d="M3.500 8a9.500 9.500 0 0 1 13 0M6.500 10.500a5 5 0 0 1 7 0" fill="none" stroke="#fff" stroke-width="1.500"/><circle cx="10" cy="12.500" r="1.300" fill="#fff"/></svg>
      <svg class="tr t4" viewBox="0 0 20 16"><path d="M1 5.500h3L9 2v12l-5-3.500H1z" fill="none" stroke="#fff" stroke-width="1.200"/><path d="M11.500 5.500a3.500 3.500 0 0 1 0 5M14 3.500a6.500 6.500 0 0 1 0 9" fill="none" stroke="#fff" stroke-width="1.200"/><path d="M17 2a9 9 0 0 1 0 12" fill="none" stroke="#6d94c9" stroke-width="1.100"/></svg>
      <svg class="tr t5" viewBox="0 0 21 16"><rect x="1" y="4" width="16" height="10" rx="1.500" fill="#fff" stroke="#fff"/><rect x="17.500" y="7" width="2.500" height="4" fill="#fff"/><path d="M6 0L3 5h3L4 9" fill="none" stroke="#003e92" stroke-width="2.400"/><path d="M6 0L3 5h3L4 9" fill="none" stroke="#fff" stroke-width="1"/></svg>
      <div class="clock"><span>12:13 PM</span><span>5/3/2025</span></div>
    </div>
  </footer>
</div>
</body>
</html>
```
FILE: styles.css
```css
* { box-sizing: border-box; }
html, body { margin: 0; padding: 0; width: 1920px; height: 1080px; overflow: hidden; background: #535353; }
body { font-family: Lato, "Open Sans", sans-serif; font-size: 13px; color: #d6d6d6; }
i { display: block; }
svg { display: block; flex: none; }
.defs { position: absolute; }
.grow { flex: 1; }
.app { display: flex; flex-direction: column; width: 1920px; height: 1080px; }

/* title bar */
.titlebar { height: 39px; flex: none; display: flex; align-items: center; background: #535353; border-bottom: 1px solid #3d3d3d; }
.ai-logo { width: 20px; height: 20px; margin-left: 13px; background: #330000; border-radius: 3px; color: #ff9a00; font: 700 13px/20px Lato, sans-serif; text-align: center; flex: none; }
.home { width: 24px; height: 20px; margin-left: 18px; }
.vsep { width: 1px; height: 30px; background: #474747; flex: none; }
.vsep.first { margin-left: 18px; }
.vsep.tall { height: 30px; }
.menu { display: flex; gap: 17px; margin-left: 18px; margin-right: 14px; padding-bottom: 3px; font-size: 15px; color: #dcdcdc; }
.workspace { width: 24px; height: 16px; margin-left: 16px; }
.chev { width: 10px; height: 6px; }
.wsc { margin-left: 8px; }
.panelicon { width: 22px; height: 18px; margin-left: 16px; }
.search { width: 212px; height: 26px; margin-left: 12px; background: #464646; border: 1px solid #4c4c4c; border-radius: 3px; display: flex; align-items: center; padding-left: 4px; color: #858585; font-size: 15px; }
.sglass { width: 20px; height: 14px; margin-right: 7px; }
.winbtns { display: flex; height: 24px; margin: -15px 5px 0 10px; border: 1px solid #5f5f5f; border-top: 0; border-radius: 0 0 5px 5px; }
.wb { width: 34px; display: flex; align-items: center; justify-content: center; border-right: 1px solid #5f5f5f; }
.wb.nb { border-right: 0; }
.wb svg { width: 14px; height: 14px; }

/* control bar */
.controlbar { height: 43px; flex: none; display: flex; align-items: center; background: #535353; border-bottom: 1px solid #3d3d3d; }
.cgrip { width: 2px; height: 24px; margin-left: 5px; background: repeating-linear-gradient(#6a6a6a 0 2px, transparent 2px 4px); }
.lbl { font-size: 13.500px; flex: none; white-space: nowrap; padding-top: 2px; }
.nosel { width: 91px; margin-left: 12px; color: #b8b8b8; font-size: 12.500px; }
.csep { width: 1px; height: 28px; background: #484848; flex: none; }
.grp { display: flex; height: 26px; border: 1px solid #4a4a4a; border-radius: 3px; flex: none; margin-top: 1px; }
.g-fill { width: 48px; margin-left: 7px; }
.g-stroke { width: 48px; margin-left: 7px; }
.swatch { width: 24px; flex: none; display: flex; align-items: center; justify-content: center; }
.swatch.white { background: #fff; }
.swatch.white svg { width: 24px; height: 24px; }
.swatch.red { background: #be1622; }
.swatch.pale { background: #e6e6e6; }
.hole { width: 10px; height: 10px; background: #3f3f3f; border: 2px solid #fff; outline: 1px solid #222; }
.dd { flex: 1; display: flex; align-items: center; justify-content: center; background: #4e4e4e; }
.dotted { color: #d6d6d6; border-bottom: 1px dotted #d6d6d6; line-height: 15px; }
.l-stroke { margin-left: 16px; width: 39px; }
.g-spin { width: 102px; margin-left: 7px; }
.spin { width: 23px; display: flex; flex-direction: column; align-items: center; justify-content: center; gap: 6px; background: #4e4e4e; }
.chev.up { transform: scaleY(-1); }
.field { background: #434343; color: #e0e0e0; font-size: 13px; line-height: 25px; flex: none; padding-left: 4px; }
.f-pt { width: 56px; }
.g-line { width: 135px; margin-left: 7px; }
.light { background: #e4e4e4; color: #222; flex: none; display: flex; align-items: center; font-size: 13px; }
.lineprev { width: 112px; padding-left: 8px; font-size: 12.500px; }
.lineprev .bar { width: 50px; height: 3px; background: #111; margin-right: 5px; }
.lineprev span { padding-top: 3px; }
.g-round { width: 131px; margin-left: 8px; }
.roundprev { width: 108px; padding-left: 9px; }
.roundprev .dot { width: 6px; height: 6px; border-radius: 3px; background: #111; margin-right: 14px; }
.l-op { margin-left: 9px; width: 47px; }
.g-op { width: 87px; margin-left: 6px; }
.f-op { width: 64px; }
.chev.right { width: 6px; height: 10px; }
.dim { color: #a8a8a8; }
.l-style { margin-left: 6px; width: 39px; }
.g-style { width: 47px; }
.s2 { margin-left: 9px; }
.cbtn { height: 24px; margin-top: 1px; background: #4e4e4e; border: 1px solid #6f6f6f; border-radius: 3px; color: #e0e0e0; font: 12.800px Lato, sans-serif; padding: 2px 0 0; flex: none; }
.b-doc { width: 116px; margin-left: 6px; }
.b-pref { width: 88px; margin-left: 6px; }
.isol { width: 22px; height: 20px; margin-left: 14px; }
.isc { margin-left: 7px; }
.cr-grid { width: 20px; height: 20px; }
.cr-mag { width: 20px; height: 24px; margin-left: 13px; }
.cr-c { margin-left: 6px; opacity: .45; }
.cr-list { width: 16px; height: 14px; margin: 0 20px 0 26px; }

/* workspace */
.workspace-area { flex: 1; display: flex; min-height: 0; }
.phead { height: 16px; background: #424242; border-bottom: 1px solid #383838; display: flex; align-items: center; padding-left: 10px; font-size: 11px; line-height: 14px; color: #bbb; flex: none; }
.phead.right { padding-left: 36px; }
.phead.far { justify-content: flex-end; padding-right: 10px; }
.dbl { letter-spacing: -1px; font-weight: 700; }
.grip { width: 24px; height: 6px; margin: 6px auto 0; background: repeating-linear-gradient(90deg, #2f2f2f 0 1px, transparent 1px 3.500px); }

.toolpanel { width: 91px; flex: none; display: flex; flex-direction: column; background: #535353; border-right: 1px solid #3a3a3a; }
.tools { display: grid; grid-template-columns: 37.500px 37.500px; grid-auto-rows: 30px; padding: 12px 0 0 8px; }
.tool { position: relative; display: flex; align-items: center; justify-content: center; }
.tool svg { width: 24px; height: 24px; }
.tool.m::after { content: ""; position: absolute; right: 0; bottom: 3px; border: 2.500px solid transparent; border-right-color: #bdbdbd; border-bottom-color: #bdbdbd; }
.tool.on { background: #363636; border-radius: 4px; height: 27px; align-self: center; }
.tool.on.m::after { bottom: 1px; }
.toolsep { height: 1px; background: #474747; margin: 2px 8px 0 8px; }
.fillstroke { position: relative; height: 72px; }
.fs-fill { position: absolute; left: 8px; top: 5px; width: 44px; height: 44px; }
.fs-stroke { position: absolute; left: 31px; top: 29px; width: 44px; height: 44px; background: #be1622; border: 1px solid #fff; outline: 1px solid #222; display: flex; align-items: center; justify-content: center; }
.fs-stroke i { width: 21px; height: 21px; background: #535353; border: 1px solid #fff; outline: 1px solid #222; }
.fs-swap { position: absolute; left: 63px; top: 7px; width: 16px; height: 16px; }
.fs-def { position: absolute; left: 8px; top: 57px; width: 16px; height: 16px; }
.trio { display: grid; grid-template-columns: repeat(3, 24px); height: 25px; margin-left: 8px; background: #4e4e4e; border-radius: 3px; width: 72px; flex: none; }
.modes { margin-top: 9px; }
.draws { margin-top: 6px; }
.cell { display: flex; align-items: center; justify-content: center; }
.cell.on { background: #383838; border-radius: 3px 0 0 3px; }
.cm { width: 16px; height: 16px; display: block; }
.c-color { background: #3f3f3f; border: 2px solid #be1622; outline: 2px solid #000; width: 13px; height: 13px; }
.c-grad { background: linear-gradient(90deg, #fff, #444); border: 2px solid #000; }
.dm { width: 15px; height: 15px; }
.screenmode { width: 30px; height: 22px; margin: 8px 0 0 31px; }
.more3 { display: flex; gap: 2px; justify-content: center; margin-top: 26px; }
.more3 i { width: 4px; height: 4px; border-radius: 2px; background: #c4c4c4; }
.toolend { height: 1px; background: #3a3a3a; margin-top: 16px; }

.docarea { width: 1464px; flex: none; display: flex; flex-direction: column; border-right: 2px solid #3a3a3a; }
.tabs { height: 35px; flex: none; display: flex; background: #424242; border-bottom: 1px solid #3a3a3a; }
.tab { width: 138.700px; flex: none; display: flex; align-items: center; padding: 0 4px 0 15px; border-right: 1px solid #3a3a3a; color: #8f8f8f; font-weight: 700; font-size: 14.700px; white-space: nowrap; }
.tab span { flex: 1; }
.tab b { font-size: 18px; line-height: 18px; color: #b0b0b0; font-weight: 700; }
.tab.active { width: 300px; background: #535353; color: #eee; }
.tab.active span { flex: none; margin-right: 12px; }
.tab.active b { color: #f4f4f4; }
.canvasrow { flex: 1; display: flex; min-height: 0; }
.canvas { flex: 1; background: #5e5e5e; padding: 48px 0 0 122px; }
.artboard { width: 1100px; height: 778px; outline: 1px solid #000; outline-offset: -1px; }
.vscroll { width: 20px; flex: none; background: #4b4b4b; display: flex; flex-direction: column; align-items: center; padding: 10px 0 8px; }
.sc-up { flex: none; }
.vthumb { width: 18px; height: 30px; margin: 411px 0 auto; background: #606060; border-radius: 9px; }
.sc-dn { opacity: .65; }
.status { height: 20px; flex: none; display: flex; align-items: flex-end; background: #4f4f4f; border-bottom: 2px solid #3a3a3a; padding-left: 6px; overflow: hidden; }
.sfield { height: 18px; background: #444; border-radius: 3px 3px 0 0; color: #eee; font-size: 13px; line-height: 24px; padding-left: 4px; flex: none; }
.sfield.z { width: 62px; }
.sfield.p { width: 50px; }
.sdd { width: 22px; height: 18px; background: #4b4b4b; border-radius: 0 3px 0 0; display: flex; align-items: center; justify-content: center; flex: none; }
.nav { height: 12px; margin-bottom: 1px; }
.n1 { width: 12px; margin-left: 12px; }
.n2 { width: 8px; margin-left: 9px; margin-right: 11px; }
.n3 { width: 8px; margin-left: 12px; }
.n4 { width: 12px; margin-left: 10px; }
.stool { width: 250px; height: 18px; margin-left: 11px; background: #535353; font-size: 13px; line-height: 24px; text-align: center; color: #c0c0c0; flex: none; }
.n5 { width: 8px; margin-left: 9px; margin-right: 10px; }
.hscroll { flex: 1; height: 18px; display: flex; align-items: center; background: #4b4b4b; padding: 0 28px 0 3px; }
.hs-l, .hs-r { width: 6px; height: 10px; }
.hthumb { width: 32px; height: 16px; border-radius: 8px; background: #606060; margin: 0 auto 0 424px; }

.dock { width: 50px; flex: none; background: #535353; border-right: 2px solid #3a3a3a; display: flex; flex-direction: column; }
.dgroup { display: flex; flex-direction: column; align-items: center; gap: 11px; border-bottom: 1px solid #3a3a3a; flex: none; }
.dgroup svg { width: 24px; height: 24px; }
.dgroup .grip { margin: 6px 0 -5px; }
.dgroup.h85 .grip { margin-bottom: -7px; }
.h85 { height: 85px; }
.h120 { height: 121px; }
.h121 { height: 121px; }
.h86 { height: 86px; }

.panel { flex: 1; display: flex; flex-direction: column; background: #535353; }
.ptabs { height: 33px; flex: none; display: flex; align-items: stretch; background: #424242; position: relative; }
.ptab { display: flex; align-items: center; justify-content: center; padding-bottom: 2px; color: #a8a8a8; font-size: 13px; font-weight: 700; border-right: 1px solid #3a3a3a; }
.ptab.active { background: #535353; color: #eee; }
.w83 { width: 83px; }
.w75 { width: 75px; }
.w59 { width: 59px; }
.pmenu { width: 14px; height: 10px; margin: 12px 0 0 75px; }
.layers { flex: 1; margin: 8px 9px 0 7px; border: 1px solid #4b4b4b; border-top: 0; border-radius: 0 0 5px 5px; min-height: 0; }
.row { height: 26.350px; display: flex; align-items: center; border-bottom: 1px solid #464646; position: relative; color: #d6d6d6; font-size: 13.500px; }
.row.sel { background: #4c6079; color: #e8e8e8; }
.c-eye { width: 25px; height: 100%; border-right: 1px solid #464646; display: flex; align-items: center; justify-content: center; flex: none; }
.c-eye svg { width: 14px; height: 10px; }
.c-lock { width: 27px; height: 100%; flex: none; }
.cbar { width: 4px; height: 100%; background: #4a78ec; margin-left: 2px; flex: none; }
.tw { width: 10px; height: 6px; margin-left: 10px; }
.thumb { width: 22px; height: 22px; background: #fff; border: 2px solid #111; margin-left: 13px; flex: none; }
.thumb.sub { margin-left: 61px; }
.lname { margin-left: 7px; flex: 1; white-space: nowrap; }
.c-t { width: 44px; height: 100%; border-left: 1px solid #464646; display: flex; align-items: center; justify-content: flex-start; flex: none; }
.tgt { width: 10px; height: 10px; border: 1px solid #bdbdbd; border-radius: 5px; margin-left: 8px; }
.tgt.full { background: #8c8c8c; }
.corner { position: absolute; right: 0; top: 0; border: 4px solid transparent; border-top-color: #e8e8e8; border-right-color: #e8e8e8; }
.pfoot { height: 25px; flex: none; display: flex; align-items: center; padding-left: 7px; border-bottom: 2px solid #3a3a3a; color: #bdbdbd; font-size: 13px; }
.count { width: 95px; flex: none; }
.fi { width: 16px; height: 16px; }
.f2 { margin-left: 17px; }
.f3 { margin-left: 15px; }
.f4 { width: 20px; margin-left: 15px; }
.f5 { margin-left: 15px; }
.f6 { margin-left: 15px; }

/* taskbar */
.taskbar { height: 60px; flex: none; background: #003e92; border-top: 1px solid #0b4da8; display: flex; align-items: center; padding: 0 0 1px 631px; position: relative; }
.tb-center { display: flex; align-items: center; }
.win { width: 29px; height: 29px; }
.tsearch { width: 123px; height: 38px; margin-left: 19px; background: #f4f6f9; border-radius: 19px; display: flex; align-items: center; justify-content: center; gap: 7px; color: #222; font: 15px "Open Sans", sans-serif; }
.tsearch svg { width: 18px; height: 18px; }
.app-i { width: 50px; height: 50px; margin-left: 5px; display: flex; align-items: center; justify-content: center; position: relative; }
.app-i svg { width: 30px; height: 30px; }
.tsearch + .app-i { margin-left: 8px; }
.app-i.dot::after { content: ""; position: absolute; bottom: -1px; left: 21px; width: 8px; height: 4px; border-radius: 2px; background: #8fa8cc; }
.ai-active { background: #1a4f9e; border-radius: 5px; }
.ai-active::after { content: ""; position: absolute; bottom: -1px; left: 15px; width: 20px; height: 4px; border-radius: 2px; background: #58b9f5; }
.ai-logo.big { width: 28px; height: 28px; margin: 0; font-size: 19px; line-height: 28px; }
.w-letter { position: absolute; left: 11px; top: 16px; color: #fff; font: 700 13px "Open Sans", sans-serif; }
.tray { margin-left: auto; display: flex; align-items: center; color: #fff; }
.tr { flex: none; }
.t1 { width: 14px; height: 8px; }
.t2 { width: 14px; height: 20px; margin-left: 26px; }
.ime { width: 14px; margin-left: 34px; font: 18px "DejaVu Sans", sans-serif; line-height: 18px; margin-top: 6px; }
.t3 { width: 20px; height: 14px; margin-left: 30px; }
.t4 { width: 20px; height: 16px; margin-left: 9px; }
.t5 { width: 21px; height: 16px; margin-left: 10px; }
.clock { display: flex; flex-direction: column; align-items: flex-end; margin: 0 24px 0 20px; font: 14.500px/20px "Noto Sans", sans-serif; white-space: nowrap; }
```
